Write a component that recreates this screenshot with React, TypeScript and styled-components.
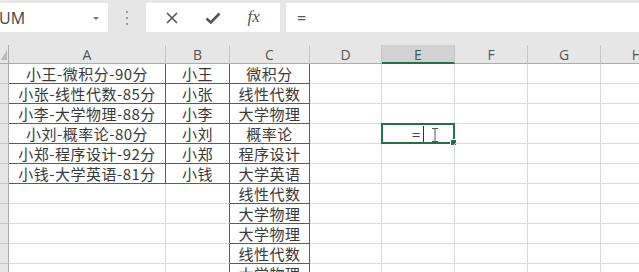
import React from 'react'
import styled, { createGlobalStyle } from 'styled-components'

const GlobalStyle = createGlobalStyle`
  html, body {
    margin: 0;
    padding: 0;
    background: #ffffff;
  }
  #root {
    width: 639px;
    height: 272px;
    overflow: hidden;
  }
`

const GREEN = '#217346'
const GRID = '#dadada'
const EDGE = '#5c5c5c'
const CJK = `'Noto Sans CJK SC', 'Noto Sans', sans-serif`
const UI = `'Open Sans', 'Noto Sans', sans-serif`

const colWidths = [157, 64, 80, 72, 73, 73, 73, 73]
const letters = ['A', 'B', 'C', 'D', 'E', 'F', 'G', 'H']
const ROWS = 12

const colA = ['小王-微积分-90分', '小张-线性代数-85分', '小李-大学物理-88分', '小刘-概率论-80分', '小郑-程序设计-92分', '小钱-大学英语-81分']
const colB = ['小王', '小张', '小李', '小刘', '小郑', '小钱']
const colC = ['微积分', '线性代数', '大学物理', '概率论', '程序设计', '大学英语', '线性代数', '大学物理', '大学物理', '线性代数', '大学物理']

const Window = styled.div`
  width: 639px;
  height: 272px;
  overflow: hidden;
  background: #e6e6e6;
  display: flex;
  flex-direction: column;
`

const Toolbar = styled.div`
  height: 45px;
  flex-shrink: 0;
  display: flex;
  align-items: flex-start;
  padding-top: 3px;
  box-sizing: border-box;
  background: #e6e6e6;
`

const NameBox = styled.div`
  width: 108px;
  height: 29px;
  background: #fff;
  display: flex;
  align-items: center;
  justify-content: space-between;
  padding-right: 9px;
  box-sizing: border-box;
  font-family: ${UI};
  font-size: 16px;
  color: #444;
`

const NameText = styled.span`
  margin-left: -1px;
  margin-top: 1px;
`

const DropArrow = styled.span`
  width: 0;
  height: 0;
  border-left: 3px solid transparent;
  border-right: 3px solid transparent;
  border-top: 3px solid #777;
  margin-top: 1px;
`

const Grip = styled.div`
  width: 38px;
  height: 29px;
  display: flex;
  flex-direction: column;
  align-items: center;
  justify-content: center;
  gap: 4px;
`

const GripDot = styled.span`
  width: 2px;
  height: 2px;
  background: #9a9a9a;
`

const FxButtons = styled.div`
  width: 134px;
  height: 29px;
  background: #fff;
  display: flex;
  align-items: center;
  justify-content: space-around;
  padding: 0 6px;
  box-sizing: border-box;
`

const IconSlot = styled.span`
  width: 30px;
  display: flex;
  justify-content: center;
  align-items: center;
  color: #505050;
`

const FxText = styled.span`
  font-family: 'Liberation Serif', serif;
  font-style: italic;
  font-size: 17px;
  color: #555;
  margin-top: -1px;
`

const FormulaInput = styled.div`
  flex: 1;
  height: 29px;
  margin-left: 6px;
  background: #fff;
  display: flex;
  align-items: center;
  padding-left: 11px;
  font-family: ${UI};
  font-size: 16px;
  color: #555;
`

const Sheet = styled.div`
  display: grid;
  grid-template-columns: 9px ${colWidths.map((w) => `${w}px`).join(' ')};
  grid-template-rows: 19px;
  grid-auto-rows: 20px;
  background: #fff;
`

const Corner = styled.div`
  background: #e6e6e6;
  border-right: 1px solid #ababab;
  border-bottom: 1px solid #ababab;
  box-sizing: border-box;
  position: relative;
  &::after {
    content: '';
    position: absolute;
    left: 1px;
    bottom: 3px;
    width: 6px;
    height: 10px;
    background: #b8b8b8;
    clip-path: polygon(100% 0, 100% 100%, 0 100%);
  }
`

const ColHeader = styled.div<{ $active?: boolean }>`
  background: ${({ $active }) => ($active ? '#d2d2d2' : '#e6e6e6')};
  border-right: 1px solid #c6c6c6;
  border-bottom: ${({ $active }) => ($active ? `2px solid ${GREEN}` : '1px solid #ababab')};
  box-sizing: border-box;
  display: flex;
  align-items: center;
  justify-content: center;
  font-family: ${UI};
  font-size: 14px;
  color: ${({ $active }) => ($active ? '#3f5a4a' : '#555')};
  padding-top: ${({ $active }) => ($active ? '1px' : '0')};
`

const RowHeader = styled.div`
  background: #e6e6e6;
  border-right: 1px solid #ababab;
  border-bottom: 1px solid #c6c6c6;
  box-sizing: border-box;
`

const Cell = styled.div<{ $edgeR?: boolean; $edgeB?: boolean }>`
  position: relative;
  border-right: 1px solid ${({ $edgeR }) => ($edgeR ? EDGE : GRID)};
  border-bottom: 1px solid ${({ $edgeB }) => ($edgeB ? EDGE : GRID)};
  box-sizing: border-box;
  display: flex;
  align-items: center;
  justify-content: center;
  font-family: ${CJK};
  font-size: 15px;
  letter-spacing: 0.5px;
  line-height: 20px;
  color: #383838;
  white-space: nowrap;
  overflow: visible;
  padding-top: 1px;
`

const EditCell = styled.div`
  position: absolute;
  left: -1px;
  top: -1px;
  right: -1px;
  bottom: -1px;
  border: 2px solid ${GREEN};
  display: flex;
  align-items: center;
  justify-content: center;
  font-family: ${UI};
  font-size: 15px;
  letter-spacing: 0;
  color: #444;
`

const Caret = styled.span`
  width: 1px;
  height: 16px;
  background: #333;
  margin-left: 3px;
`

const FillHandle = styled.span`
  position: absolute;
  right: -4px;
  bottom: -4px;
  width: 5px;
  height: 5px;
  background: ${GREEN};
  border: 1px solid #fff;
`

const IBeam = styled.svg`
  position: absolute;
  left: 48px;
  top: 3px;
`

const bordered = (r: number, c: number) => (r < 6 && c <= 2) || (c === 2 && r < 11)

const cellText = (r: number, c: number) => {
  if (c === 0) return colA[r] ?? ''
  if (c === 1) return colB[r] ?? ''
  if (c === 2) return colC[r] ?? ''
  return ''
}

const CrossIcon = () => (
  <svg width="14" height="14" viewBox="0 0 14 14">
    <path d="M2 2 L12 12 M12 2 L2 12" stroke="#555" strokeWidth="1.6" fill="none" />
  </svg>
)

const CheckIcon = () => (
  <svg width="16" height="14" viewBox="0 0 16 14">
    <path d="M1.5 7.5 L5.8 11.5 L14.5 2.5" stroke="#555" strokeWidth="2.6" fill="none" />
  </svg>
)

export default function App() {
  return (
    <Window>
      <GlobalStyle />
      <Toolbar>
        <NameBox>
          <NameText>UM</NameText>
          <DropArrow />
        </NameBox>
        <Grip>
          <GripDot />
          <GripDot />
          <GripDot />
        </Grip>
        <FxButtons>
          <IconSlot>
            <CrossIcon />
          </IconSlot>
          <IconSlot>
            <CheckIcon />
          </IconSlot>
          <IconSlot>
            <FxText>fx</FxText>
          </IconSlot>
        </FxButtons>
        <FormulaInput>=</FormulaInput>
      </Toolbar>
      <Sheet>
        <Corner />
        {letters.map((l) => (
          <ColHeader key={l} $active={l === 'E'}>
            {l}
          </ColHeader>
        ))}
        {Array.from({ length: ROWS }).map((_, r) => (
          <React.Fragment key={r}>
            <RowHeader />
            {letters.map((l, c) => (
              <Cell
                key={l}
                $edgeR={bordered(r, c) || bordered(r, c + 1)}
                $edgeB={bordered(r, c) || bordered(r + 1, c)}
              >
                {cellText(r, c)}
                {r === 3 && l === 'E' && (
                  <EditCell>
                    <span>=</span>
                    <Caret />
                    <IBeam width="8" height="14" viewBox="0 0 8 14">
                      <path d="M1 0.5 H7 M4 0.5 V13.5 M1 13.5 H7" stroke="#555" strokeWidth="1" fill="none" />
                    </IBeam>
                    <FillHandle />
                  </EditCell>
                )}
              </Cell>
            ))}
          </React.Fragment>
        ))}
      </Sheet>
    </Window>
  )
}
